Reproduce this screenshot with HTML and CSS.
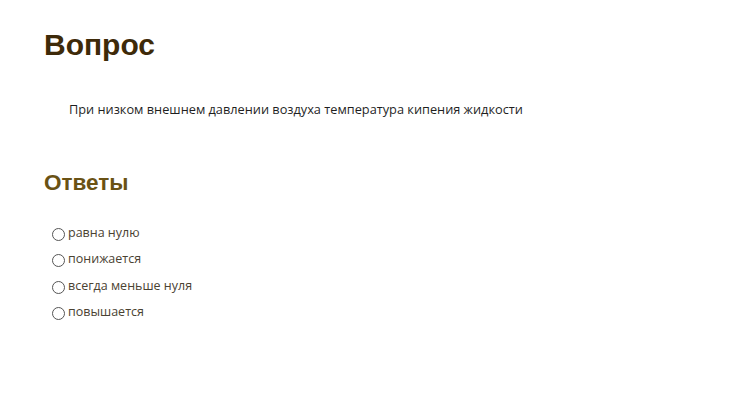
FILE: index.html
```html
<!DOCTYPE html>
<html lang="ru">
<head>
<meta charset="utf-8">
<link rel="stylesheet" href="styles.css">
</head>
<body>
<main class="page">
  <h1 class="title">Вопрос</h1>
  <p class="question">При низком внешнем давлении воздуха температура кипения жидкости</p>
  <h2 class="subtitle">Ответы</h2>
  <ul class="answers">
    <li class="answer"><span class="radio"></span><span>равна нулю</span></li>
    <li class="answer"><span class="radio"></span><span>понижается</span></li>
    <li class="answer"><span class="radio"></span><span>всегда меньше нуля</span></li>
    <li class="answer"><span class="radio"></span><span>повышается</span></li>
  </ul>
</main>
</body>
</html>
```
FILE: styles.css
```css
html, body { margin: 0; padding: 0; background: #fff; }
.page { padding: 28px 0 0 44px; }
.title {
  margin: 0;
  font-family: "Liberation Sans", Arial, sans-serif;
  font-weight: bold;
  font-size: 30px;
  line-height: 34px;
  color: #3e2a09;
}
.question {
  margin: 38px 0 0 25px;
  font-family: "Open Sans", sans-serif;
  font-size: 12.75px;
  line-height: 18px;
  color: #1f1f1f;
}
.subtitle {
  margin: 52px 0 0 0;
  font-family: "Liberation Sans", Arial, sans-serif;
  font-weight: bold;
  font-size: 22.5px;
  line-height: 26px;
  color: #6a5214;
}
.answers {
  list-style: none;
  margin: 28px 0 0 8px;
  padding: 0;
  display: flex;
  flex-direction: column;
  gap: 8.3px;
}
.answer {
  display: flex;
  align-items: center;
  gap: 3px;
  font-family: "Open Sans", sans-serif;
  font-size: 12.5px;
  line-height: 18px;
  color: #4a4232;
}
.radio {
  width: 11px;
  height: 11px;
  border: 1px solid #555;
  border-radius: 50%;
  margin-top: 3px;
}
```
